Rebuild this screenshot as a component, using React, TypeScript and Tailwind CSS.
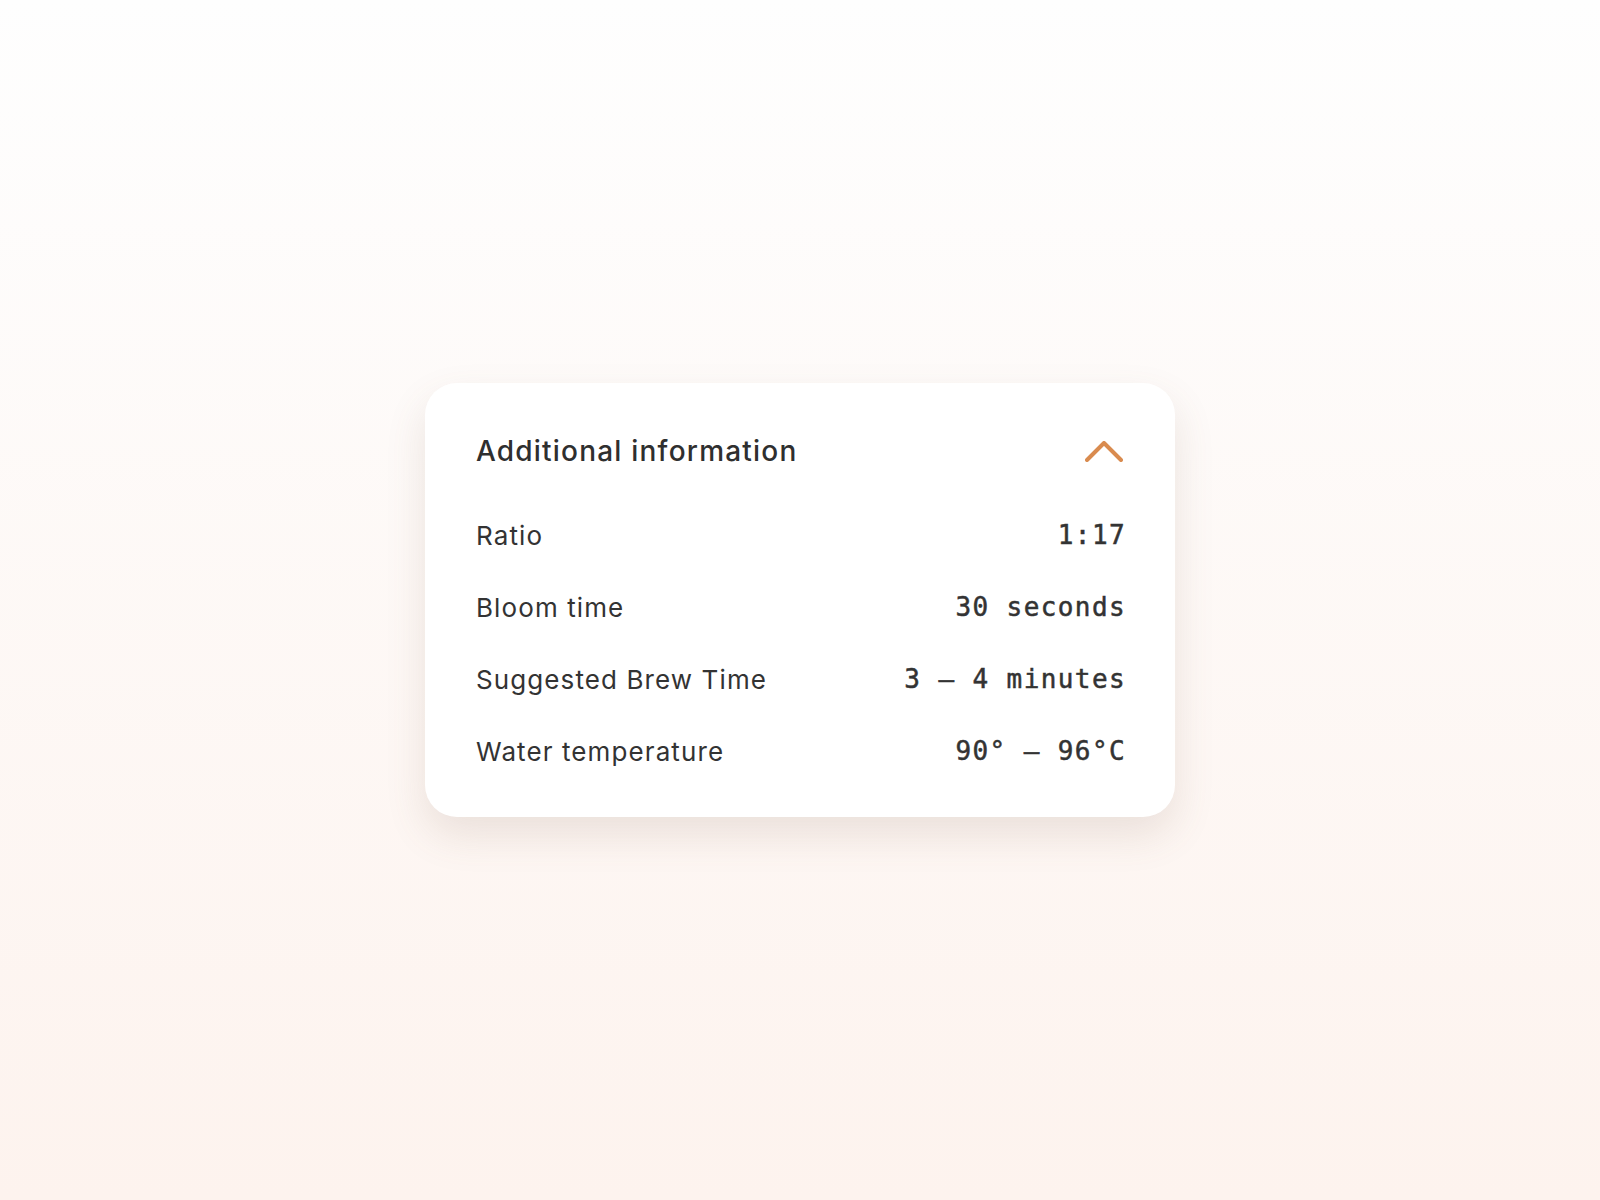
export default function App() {
  const rows = [
    { label: "Ratio", value: "1:17" },
    { label: "Bloom time", value: "30 seconds" },
    { label: "Suggested Brew Time", value: "3 – 4 minutes" },
    { label: "Water temperature", value: "90° – 96°C" },
  ];

  return (
    <div className="min-h-screen w-full flex items-center justify-center bg-gradient-to-b from-[#fefefe] to-[#fdf3ee] font-['Inter',sans-serif]">
      {/* Card */}
      <div className="w-[750px] bg-white rounded-[32px] px-[51px] pt-12 pb-[46px] shadow-[0_18px_40px_rgba(120,90,70,0.14)]">
        {/* Header */}
        <div className="h-10 flex items-center justify-between">
          <h2 className="text-[28px] font-medium text-[#2f2f2f] tracking-[1.2px]">
            Additional information
          </h2>
          <svg width="38" height="21" viewBox="0 0 38 21" fill="none" className="mr-[1px]">
            <path
              d="M2 19 L19 2 L36 19"
              stroke="#d98b4f"
              strokeWidth="4"
              strokeLinecap="round"
              strokeLinejoin="round"
            />
          </svg>
        </div>

        {/* Rows */}
        <div className="mt-11 flex flex-col gap-8">
          {rows.map((r) => (
            <div key={r.label} className="h-10 flex items-center justify-between">
              <span className="text-[26px] text-[#333333] tracking-[1.1px]">{r.label}</span>
              <span className="-mr-[2px] text-[26px] text-[#333333] font-['DejaVu_Sans_Mono',monospace] tracking-[1.4px] [-webkit-text-stroke:0.5px_#333333]">
                {r.value}
              </span>
            </div>
          ))}
        </div>
      </div>
    </div>
  );
}
